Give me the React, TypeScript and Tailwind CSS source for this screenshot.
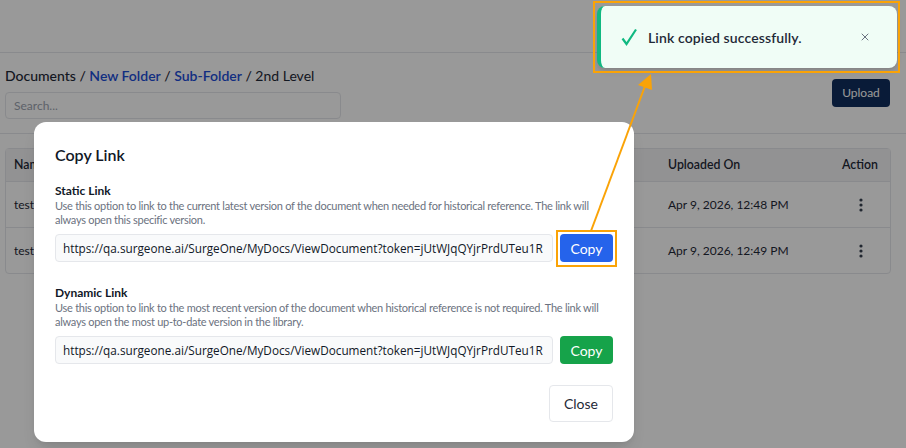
import { X } from 'lucide-react';

const URL_TEXT = 'https://qa.surgeone.ai/SurgeOne/MyDocs/ViewDocument?token=jUtWJqQYjrPrdUTeu1R';

const ROWS = [
  { name: 'test', uploaded: 'Apr 9, 2026, 12:48 PM' },
  { name: 'test', uploaded: 'Apr 9, 2026, 12:49 PM' },
];

function LinkBlock({ title, lines, color }: { title: string; lines: string[]; color: string }) {
  return (
    <div>
      <div className="text-[12px] leading-[17px] font-bold text-[#111827]">{title}</div>
      {lines.map((line) => (
        <div key={line} className="text-[11px] leading-[14px] tracking-[-0.27px] whitespace-nowrap text-[#6b7280]">
          {line}
        </div>
      ))}
      <div className="mt-[7px] flex gap-[7px]">
        <div className="h-[28px] w-[498px] overflow-hidden rounded border border-[#e5e7eb] bg-[#f9fafb] pl-[7px] font-['Open_Sans',sans-serif] text-[11.75px] leading-[27px] whitespace-nowrap text-[#111827]">
          {URL_TEXT}
        </div>
        <button className={`h-[28px] w-[53px] rounded text-[14px] text-white ${color}`}>Copy</button>
      </div>
    </div>
  );
}

export default function App() {
  return (
    <div className="relative h-[448px] w-[906px] overflow-hidden bg-white font-['Lato',sans-serif]">
      {/* Page behind the dialog */}
      <div className="h-[53px] border-b border-[#e5e7eb]" />
      <div className="flex h-[81px] items-start justify-between border-b border-[#e5e7eb] pl-[5px] pr-[16px]">
        <div className="w-[336px]">
          <div className="mt-[14px] text-[14px] leading-[18px] font-medium text-[#1f2937]">
            Documents / <span className="font-semibold text-[#1d4ed8]">New Folder</span> /{' '}
            <span className="font-semibold text-[#1d4ed8]">Sub-Folder</span> /{' '}
            <span className="font-normal">2nd Level</span>
          </div>
          <div className="mt-[7px] h-[27px] rounded border border-[#e5e7eb] pl-[8px] text-[12px] leading-[25px] text-[#9ca3af]">
            Search...
          </div>
        </div>
        <button className="mt-[26px] h-[28px] w-[58px] rounded bg-[#0f2d5e] text-[12px] text-white">Upload</button>
      </div>
      <div className="mx-[5px] mt-[14px] w-[886px] rounded-sm border border-[#e5e7eb] text-[12px] text-[#1f2937]">
        <div className="flex h-[32px] items-center bg-[#f3f4f6] text-[12.3px] font-semibold">
          <div className="w-[662px] pl-[8px]">Name</div>
          <div className="w-[174px]">Uploaded On</div>
          <div>Action</div>
        </div>
        {ROWS.map((row) => (
          <div key={row.uploaded} className="flex h-[46px] items-center border-t border-[#e5e7eb]">
            <div className="w-[662px] pl-[8px]">{row.name}</div>
            <div className="w-[190px]">{row.uploaded}</div>
            <svg width="6" height="14" viewBox="0 0 6 14" className="fill-[#374151]">
              <circle cx="3" cy="2" r="1.6" />
              <circle cx="3" cy="7" r="1.6" />
              <circle cx="3" cy="12" r="1.6" />
            </svg>
          </div>
        ))}
      </div>

      {/* Dim layer */}
      <div className="absolute inset-0 bg-black/40" />

      {/* Copy Link dialog */}
      <div className="absolute top-[122px] left-[34px] h-[320px] w-[600px] rounded-xl bg-white px-[21px] pt-[23px] shadow-lg">
        <h2 className="text-[16px] leading-[20px] font-semibold text-[#111827]">Copy Link</h2>
        <div className="mt-[17px] flex flex-col gap-[22px]">
          <LinkBlock
            title="Static Link"
            color="bg-[#2563eb]"
            lines={[
              'Use this option to link to the current latest version of the document when needed for historical reference. The link will',
              'always open this specific version.',
            ]}
          />
          <LinkBlock
            title="Dynamic Link"
            color="bg-[#16a34a]"
            lines={[
              'Use this option to link to the most recent version of the document when historical reference is not required. The link will',
              'always open the most up-to-date version in the library.',
            ]}
          />
        </div>
        <div className="mt-[21px] flex justify-end">
          <button className="h-[37px] w-[64px] rounded border border-[#e5e7eb] bg-white text-[14px] text-[#1f2937]">Close</button>
        </div>
      </div>

      {/* Toast */}
      <div className="absolute top-[6px] left-[597px] flex h-[62px] w-[300px] items-center rounded-lg border-l-4 border-[#10b981] bg-[#f0fdf6] pl-[20px] pr-[26px] shadow-md">
        <svg width="17" height="18" viewBox="0 0 17 18" fill="none" className="shrink-0 stroke-[#10b981]">
          <path d="M1.5 10.5 L5.5 16 L15 1.5" strokeWidth="2.2" />
        </svg>
        <span className="ml-[10px] flex-1 text-[14px] font-semibold tracking-[0.12px] text-[#1f2937]">Link copied successfully.</span>
        <X size={12} strokeWidth={2} className="text-[#6b7280]" />
      </div>

      {/* Annotation */}
      <div className="absolute top-[1px] left-[593px] h-[72px] w-[307px] border-2 border-[#faa307]" />
      <div className="absolute top-[230px] left-[556px] h-[37px] w-[61px] border-2 border-[#faa307]" />
      <svg width="906" height="448" className="pointer-events-none absolute top-0 left-0">
        <line x1="591" y1="231" x2="645" y2="86" stroke="#faa307" strokeWidth="2" />
        <polygon points="651,74 638,85 652,90" fill="#faa307" />
      </svg>
    </div>
  );
}
